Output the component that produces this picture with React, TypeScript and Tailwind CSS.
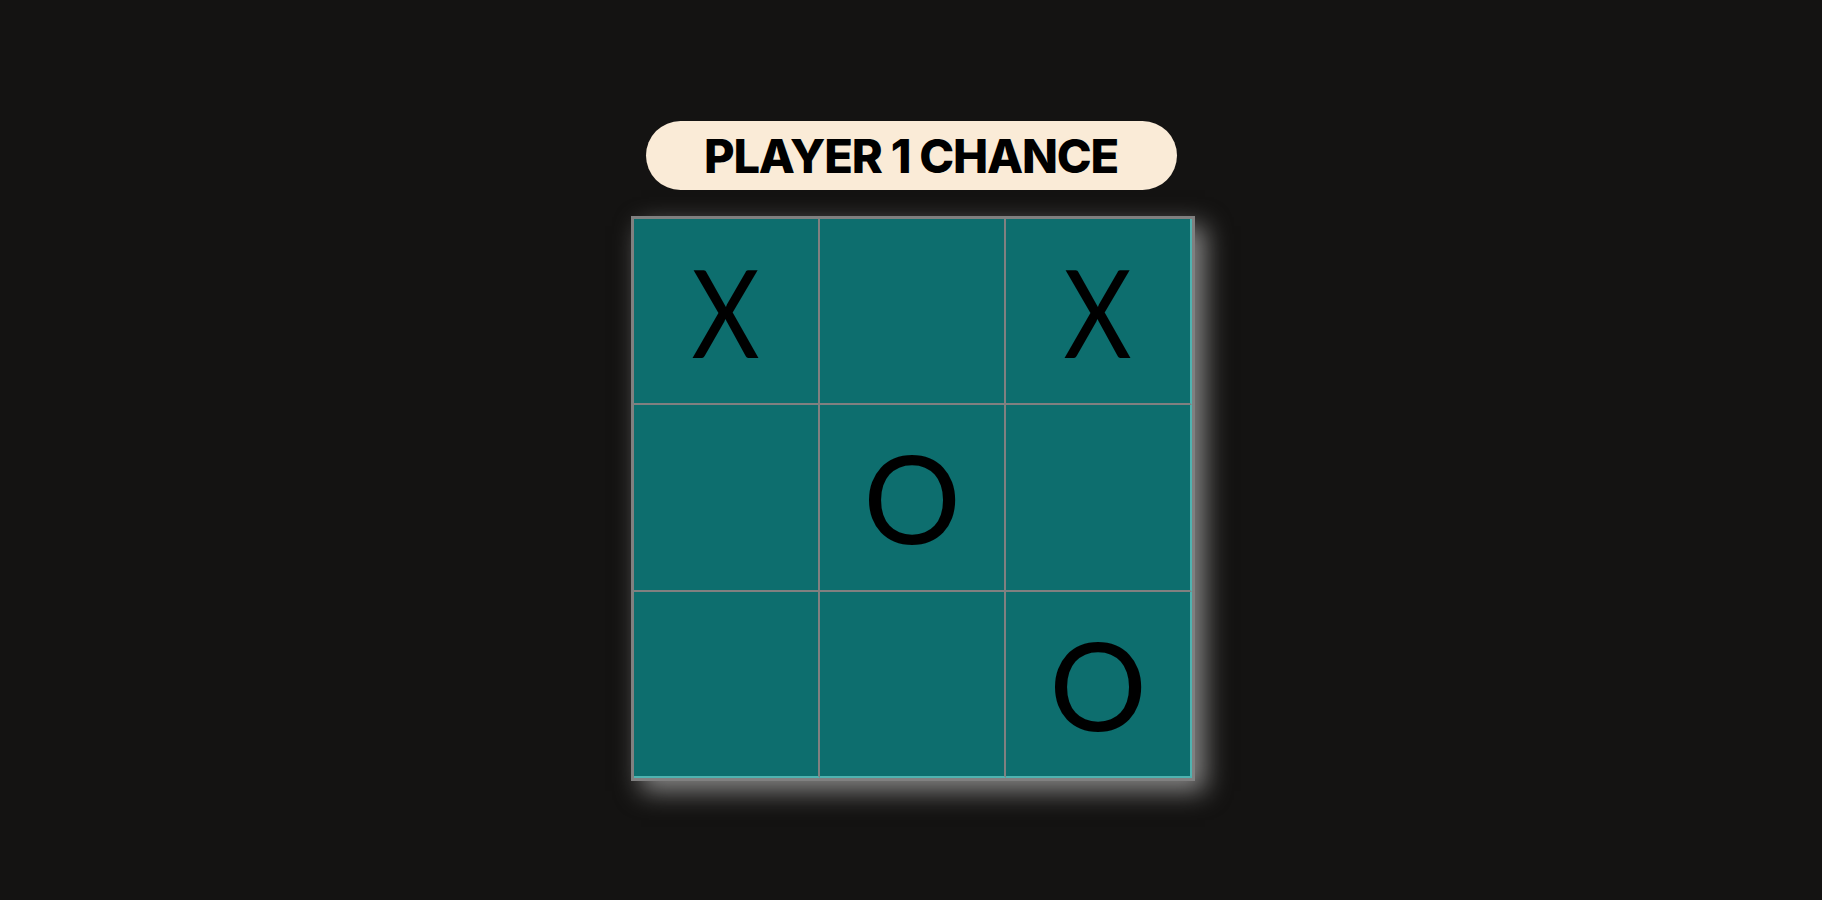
import React from "react";

const board = ["X", "", "X", "", "O", "", "", "", "O"];

export default function App() {
  return (
    <div className="min-h-screen w-full bg-[#141312] flex flex-col items-center pt-[121px]">
      {/* turn pill */}
      <div className="h-[69px] w-[531px] rounded-full bg-[#faebd7] flex items-center justify-center">
        <span
          className="text-[47px] font-extrabold text-black tracking-[-1.2px] leading-none"
          style={{ fontFamily: "Inter, 'Noto Sans', sans-serif" }}
        >
          PLAYER 1 CHANCE
        </span>
      </div>

      {/* board */}
      <div className="mt-[26px] ml-[4px] grid grid-cols-3 w-[564px] h-[565px] border-[3px] border-[#808080] bg-[#0d6e6e] shadow-[10px_10px_24px_rgba(210,210,210,0.6)]">
        {board.map((v, i) => (
          <div
            key={i}
            className={
              "flex items-center justify-center border-[#808080] " +
              (i % 3 !== 2 ? "border-r-2 " : "border-r-2 border-r-[#4fb3b0] ") +
              (i < 6 ? "border-b-2" : "border-b-2 border-b-[#4fb3b0]")
            }
          >
            <span
              className={
                "text-[122px] font-normal text-black leading-none " +
                (v === "X" ? "scale-x-[0.86] inline-block" : "")
              }
              style={{ fontFamily: "Lato, 'Open Sans', sans-serif" }}
            >
              {v}
            </span>
          </div>
        ))}
      </div>
    </div>
  );
}
